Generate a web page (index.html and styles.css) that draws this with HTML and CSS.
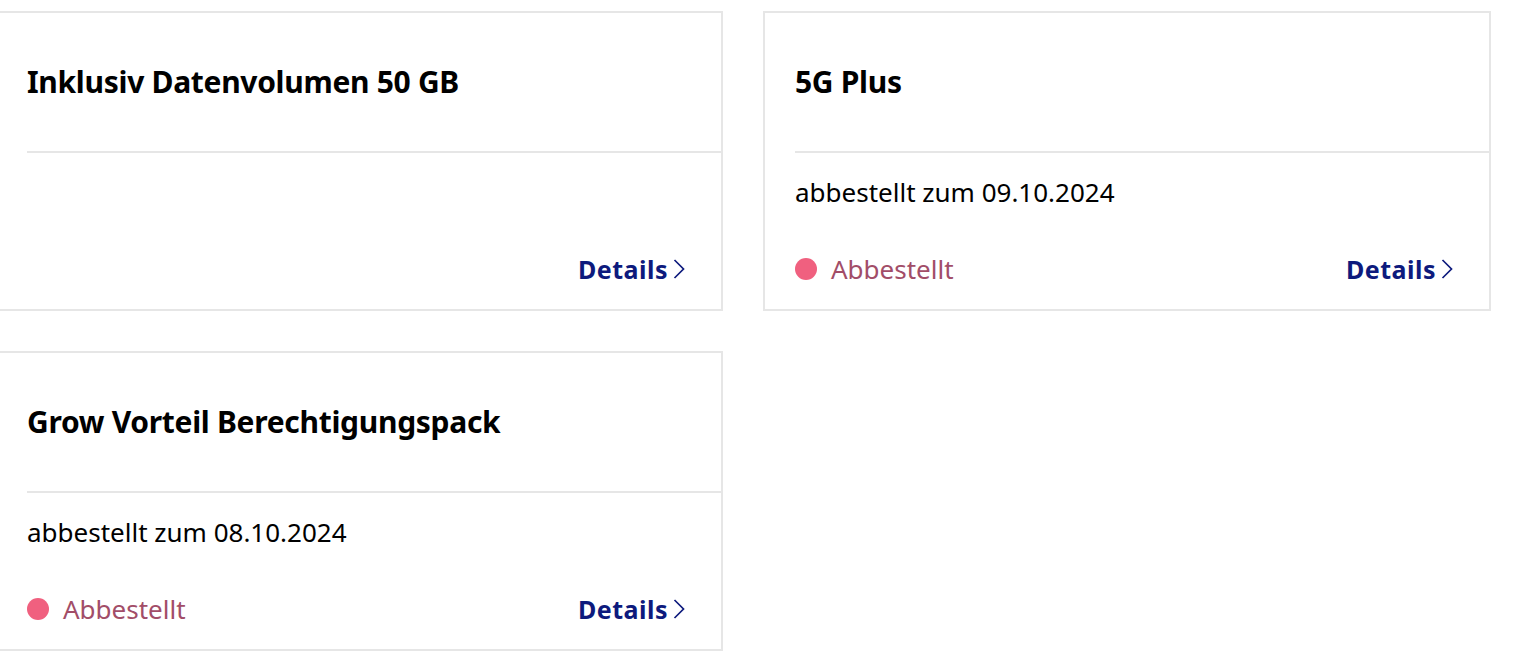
FILE: index.html
```html
<!DOCTYPE html>
<html lang="de">
<head>
<meta charset="utf-8">
<title>Optionen</title>
<link rel="stylesheet" href="styles.css">
</head>
<body>
<main class="grid">
  <article class="card">
    <header class="card-head"><h2 class="card-title">Inklusiv Datenvolumen 50 GB</h2></header>
    <div class="card-body">
      <div class="card-foot">
        <span class="status"></span>
        <a class="details" href="#">Details<svg class="chev" viewBox="0 0 12 20" width="12" height="20"><path d="M1.5 1 L10.5 10 L1.5 19" fill="none" stroke="currentColor" stroke-width="1.7"/></svg></a>
      </div>
    </div>
  </article>
  <article class="card">
    <header class="card-head"><h2 class="card-title">5G Plus</h2></header>
    <div class="card-body">
      <p class="card-note">abbestellt zum 09.10.2024</p>
      <div class="card-foot">
        <span class="status"><span class="status-dot"></span>Abbestellt</span>
        <a class="details" href="#">Details<svg class="chev" viewBox="0 0 12 20" width="12" height="20"><path d="M1.5 1 L10.5 10 L1.5 19" fill="none" stroke="currentColor" stroke-width="1.7"/></svg></a>
      </div>
    </div>
  </article>
  <article class="card">
    <header class="card-head"><h2 class="card-title">Grow Vorteil Berechtigungspack</h2></header>
    <div class="card-body">
      <p class="card-note">abbestellt zum 08.10.2024</p>
      <div class="card-foot">
        <span class="status"><span class="status-dot"></span>Abbestellt</span>
        <a class="details" href="#">Details<svg class="chev" viewBox="0 0 12 20" width="12" height="20"><path d="M1.5 1 L10.5 10 L1.5 19" fill="none" stroke="currentColor" stroke-width="1.7"/></svg></a>
      </div>
    </div>
  </article>
</main>
</body>
</html>
```
FILE: styles.css
```css
* { box-sizing: border-box; }
html, body { margin: 0; padding: 0; background: #fff; }
body {
  font-family: "Noto Sans", Lato, "Liberation Sans", sans-serif;
  color: #000;
  overflow: hidden;
}
.grid {
  display: grid;
  grid-template-columns: 728px 728px;
  grid-auto-rows: 300px;
  column-gap: 40px;
  row-gap: 40px;
  margin-left: -5px;
  padding-top: 11px;
}
.card {
  border: 2px solid #e6e6e6;
  display: flex;
  flex-direction: column;
  background: #fff;
}
.card-head {
  margin-left: 30px;
  height: 140px;
  border-bottom: 2px solid #e6e6e6;
  display: flex;
  align-items: center;
  flex: none;
}
.card-title {
  margin: 0;
  font-size: 30px;
  font-weight: 700;
  line-height: 36px;
  letter-spacing: -0.3px;
}
.card-body {
  flex: 1;
  display: flex;
  flex-direction: column;
  padding: 0 36px 22px 30px;
}
.card-note {
  margin: 21px 0 0;
  font-size: 26px;
  line-height: 36px;
}
.card-foot {
  margin-top: auto;
  height: 36px;
  display: flex;
  align-items: center;
  justify-content: space-between;
}
.status {
  display: inline-flex;
  align-items: center;
  gap: 14px;
  font-size: 26px;
  color: #a24d68;
}
.status-dot {
  width: 22px;
  height: 22px;
  border-radius: 50%;
  background: #f0607f;
}
.details {
  display: inline-flex;
  align-items: center;
  gap: 5px;
  font-size: 25px;
  font-weight: 700;
  letter-spacing: 0.5px;
  color: #0d1a7d;
  text-decoration: none;
}
.chev { display: block; }
```
